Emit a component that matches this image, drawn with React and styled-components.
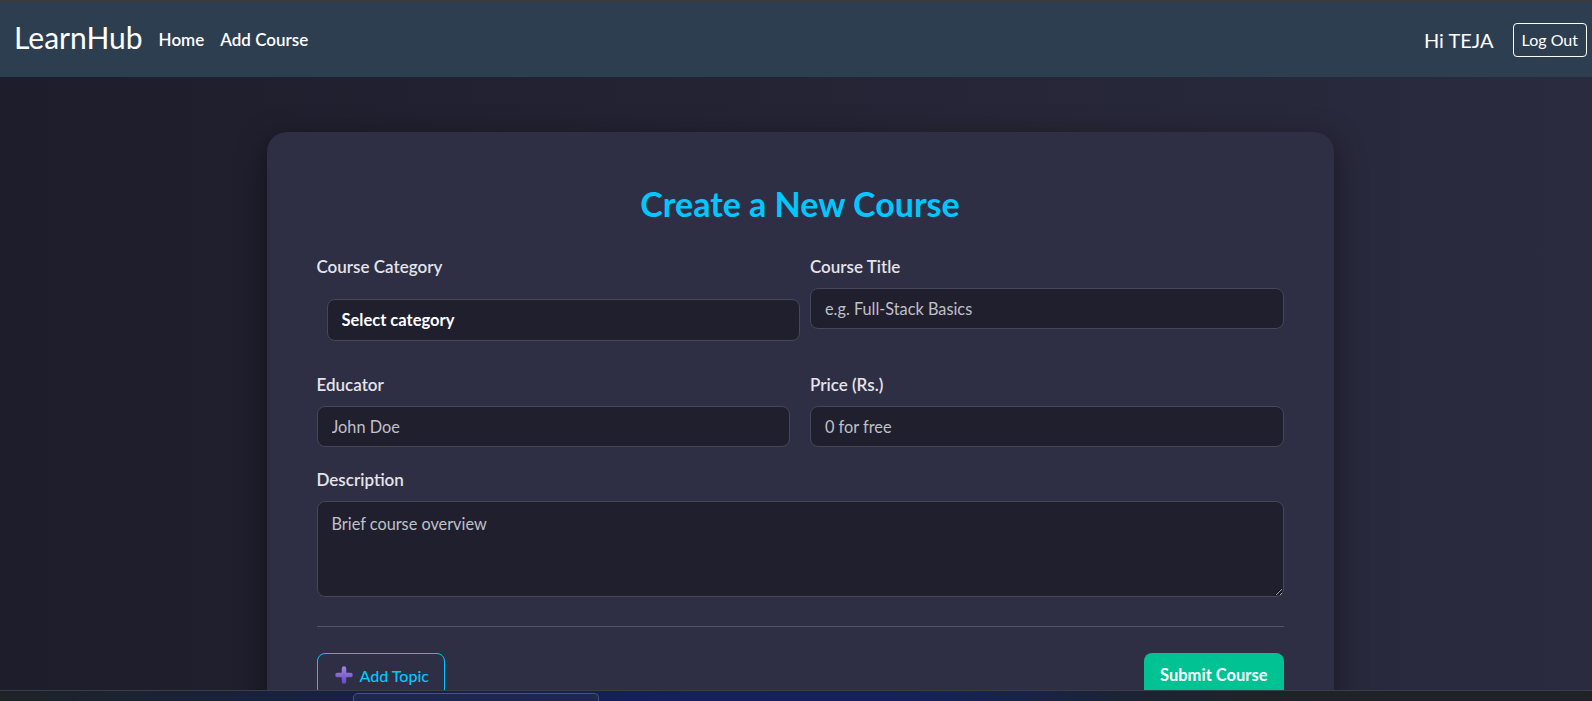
import styled, { createGlobalStyle } from "styled-components";

const GlobalStyle = createGlobalStyle`
  html, body {
    margin: 0;
    height: 100%;
  }
  body {
    font-family: Lato, "Open Sans", sans-serif;
    background: linear-gradient(to right, #1d1d2b 0%, #242435 50%, #2b2b40 100%);
    color: #fff;
    overflow: hidden;
  }
  * {
    box-sizing: border-box;
  }
`;

const Navbar = styled.header`
  height: 77px;
  border-top: 2px solid #3b3b3d;
  background: #2e3e51;
  display: flex;
  align-items: center;
  justify-content: space-between;
  padding: 0 5px 0 14px;
`;

const NavLeft = styled.nav`
  display: flex;
  align-items: center;
  gap: 16px;
`;

const Brand = styled.a`
  font-size: 30px;
  color: #fff;
  margin-top: -6px;
`;

const NavLink = styled.a`
  font-size: 17px;
  font-weight: 600;
  color: #fff;
`;

const NavRight = styled.div`
  display: flex;
  align-items: center;
  gap: 19px;
`;

const Greeting = styled.span`
  font-size: 20px;
  color: #fff;
`;

const OutlineButton = styled.button`
  height: 34px;
  padding: 0 8px;
  border: 1px solid #fff;
  border-radius: 4px;
  background: transparent;
  color: #fff;
  font-family: Lato, sans-serif;
  font-size: 16px;
`;

const Main = styled.main`
  display: flex;
  justify-content: center;
  padding: 55px 0 0 0;
`;

const Card = styled.section`
  width: 1067px;
  margin-left: 8px;
  padding: 50px;
  background: #2e2e45;
  border-radius: 20px;
  box-shadow: 0 8px 32px rgba(0, 0, 0, 0.45);
`;

const Title = styled.h1`
  margin: 3px 0 34px;
  text-align: center;
  font-size: 34px;
  font-weight: 700;
  color: #00c8ff;
  line-height: 38px;
`;

const Grid = styled.div`
  display: grid;
  grid-template-columns: 1fr 1fr;
  column-gap: 20px;
  row-gap: 23px;
`;

const Field = styled.div`
  display: flex;
  flex-direction: column;
  grid-column: ${({ wide }) => (wide ? "1 / -1" : "auto")};
`;

const Label = styled.label`
  font-size: 17px;
  font-weight: 600;
  color: #e4e4ea;
  line-height: 20px;
  margin-bottom: 11px;
`;

const fieldBase = `
  width: 100%;
  background: #1f1f2e;
  border: 1px solid #47475a;
  border-radius: 8px;
  color: #fff;
  font-family: Lato, sans-serif;
  font-size: 16.3px;
  outline: none;
  &::placeholder {
    color: #c0c0c8;
  }
`;

const Input = styled.input`
  ${fieldBase}
  height: 41px;
  padding: 0 14px;
`;

const Select = styled.select`
  ${fieldBase}
  height: 42px;
  margin: 11px 0 11px 10px;
  padding: 0 14px;
  font-size: 16.5px;
  font-weight: 700;
  appearance: none;
`;

const TextArea = styled.textarea`
  ${fieldBase}
  height: 96px;
  padding: 12px 14px;
  resize: vertical;
`;

const Divider = styled.hr`
  border: none;
  border-top: 1px solid #55556a;
  margin: 29px 0 26px;
`;

const Actions = styled.div`
  display: flex;
  justify-content: space-between;
  align-items: center;
`;

const AddButton = styled.button`
  display: flex;
  align-items: center;
  gap: 7px;
  height: 44px;
  padding: 0 15px 0 17px;
  border: 1px solid #00c8ff;
  border-radius: 8px;
  background: transparent;
  color: #00c8ff;
  font-family: Lato, sans-serif;
  font-size: 16px;
  font-weight: 500;
`;

const SubmitButton = styled.button`
  height: 44px;
  padding: 0 16px;
  border: none;
  border-radius: 8px;
  background: #00c292;
  color: #fff;
  font-family: Lato, sans-serif;
  font-size: 16.5px;
  font-weight: 700;
`;

const Taskbar = styled.div`
  position: fixed;
  left: 0;
  right: 0;
  bottom: 0;
  height: 11px;
  border-top: 1px solid #3a3f46;
  background: linear-gradient(
    to right,
    #1e2328 0%,
    #18213e 18%,
    #13205a 40%,
    #15225a 58%,
    #1b2336 70%,
    #1f2328 80%
  );
  display: flex;
  align-items: flex-end;
  padding-left: 353px;
`;

const SearchBox = styled.div`
  width: 246px;
  height: 8px;
  border-radius: 5px 5px 0 0;
  border: 1px solid #4c5470;
  border-bottom: none;
  background: #1d2750;
`;

const PlusIcon = () => (
  <svg width="18" height="18" viewBox="0 0 18 18">
    <defs>
      <linearGradient id="plusGrad" x1="0" y1="0" x2="0" y2="1">
        <stop offset="0" stopColor="#9b7fe6" />
        <stop offset="1" stopColor="#6d4fc0" />
      </linearGradient>
    </defs>
    <path
      d="M9 2.5v13M2.5 9h13"
      stroke="url(#plusGrad)"
      strokeWidth="4.5"
      strokeLinecap="round"
      fill="none"
    />
  </svg>
);

export default function App() {
  return (
    <>
      <GlobalStyle />
      <Navbar>
        <NavLeft>
          <Brand>LearnHub</Brand>
          <NavLink>Home</NavLink>
          <NavLink>Add Course</NavLink>
        </NavLeft>
        <NavRight>
          <Greeting>Hi TEJA</Greeting>
          <OutlineButton>Log Out</OutlineButton>
        </NavRight>
      </Navbar>
      <Main>
        <Card>
          <Title>Create a New Course</Title>
          <Grid>
            <Field>
              <Label>Course Category</Label>
              <Select defaultValue="">
                <option value="">Select category</option>
              </Select>
            </Field>
            <Field>
              <Label>Course Title</Label>
              <Input placeholder="e.g. Full-Stack Basics" />
            </Field>
            <Field>
              <Label>Educator</Label>
              <Input placeholder="John Doe" />
            </Field>
            <Field>
              <Label>Price (Rs.)</Label>
              <Input placeholder="0 for free" />
            </Field>
            <Field wide>
              <Label>Description</Label>
              <TextArea placeholder="Brief course overview" />
            </Field>
          </Grid>
          <Divider />
          <Actions>
            <AddButton>
              <PlusIcon />
              Add Topic
            </AddButton>
            <SubmitButton>Submit Course</SubmitButton>
          </Actions>
        </Card>
      </Main>
      <Taskbar>
        <SearchBox />
      </Taskbar>
    </>
  );
}
